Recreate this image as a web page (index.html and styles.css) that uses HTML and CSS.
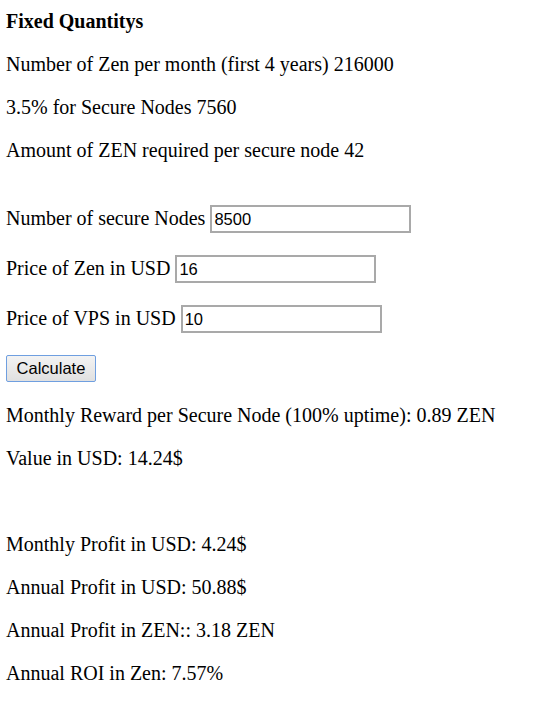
FILE: index.html
```html
<!DOCTYPE html>
<html>
<head>
<meta charset="utf-8">
<link rel="stylesheet" href="styles.css">
</head>
<body>
<div class="sheet">
  <p class="line"><b>Fixed Quantitys</b></p>
  <p class="line">Number of Zen per month (first 4 years) 216000</p>
  <p class="line">3.5% for Secure Nodes 7560</p>
  <p class="line">Amount of ZEN required per secure node 42</p>

  <form class="fields">
    <p class="field">Number of secure Nodes <input class="box" type="text" value="8500"></p>
    <p class="field">Price of Zen in USD <input class="box" type="text" value="16"></p>
    <p class="field">Price of VPS in USD <input class="box" type="text" value="10"></p>
    <p class="field"><button class="calc" type="button">Calculate</button></p>
  </form>

  <div class="results">
    <p class="line">Monthly Reward per Secure Node (100% uptime): 0.89 ZEN</p>
    <p class="line">Value in USD: 14.24$</p>
  </div>

  <div class="results profit">
    <p class="line">Monthly Profit in USD: 4.24$</p>
    <p class="line">Annual Profit in USD: 50.88$</p>
    <p class="line">Annual Profit in ZEN:: 3.18 ZEN</p>
    <p class="line">Annual ROI in Zen: 7.57%</p>
  </div>
</div>
</body>
</html>
```

FILE: styles.css
```css
html, body {
  margin: 0;
  padding: 0;
  background: #ffffff;
}

.sheet {
  padding: 10px 0 0 6px;
  font-family: "Liberation Serif", "Times New Roman", serif;
  font-size: 20px;
  line-height: 23px;
  color: #000000;
}

.line {
  margin: 0 0 20px 0;
}

.fields {
  margin: 43px 0 0 0;
}

.field {
  margin: 0 0 22px 0;
}

.box {
  box-sizing: border-box;
  width: 201px;
  height: 28px;
  margin: 0;
  padding: 0 2px;
  border: 2px solid #a9a9a9;
  font-family: "Liberation Sans", Arial, sans-serif;
  font-size: 16.5px;
  color: #000000;
  background: #ffffff;
  vertical-align: baseline;
}

.calc {
  box-sizing: border-box;
  width: 90px;
  height: 27px;
  margin: 0;
  padding: 0;
  border: 1px solid #6f9fe0;
  border-radius: 2px;
  background: linear-gradient(#f3f3f3, #e0e0e0);
  font-family: "Liberation Sans", Arial, sans-serif;
  font-size: 16.5px;
  color: #000000;
}

.results {
  margin: 0;
}

.profit {
  margin-top: 63px;
}
```
